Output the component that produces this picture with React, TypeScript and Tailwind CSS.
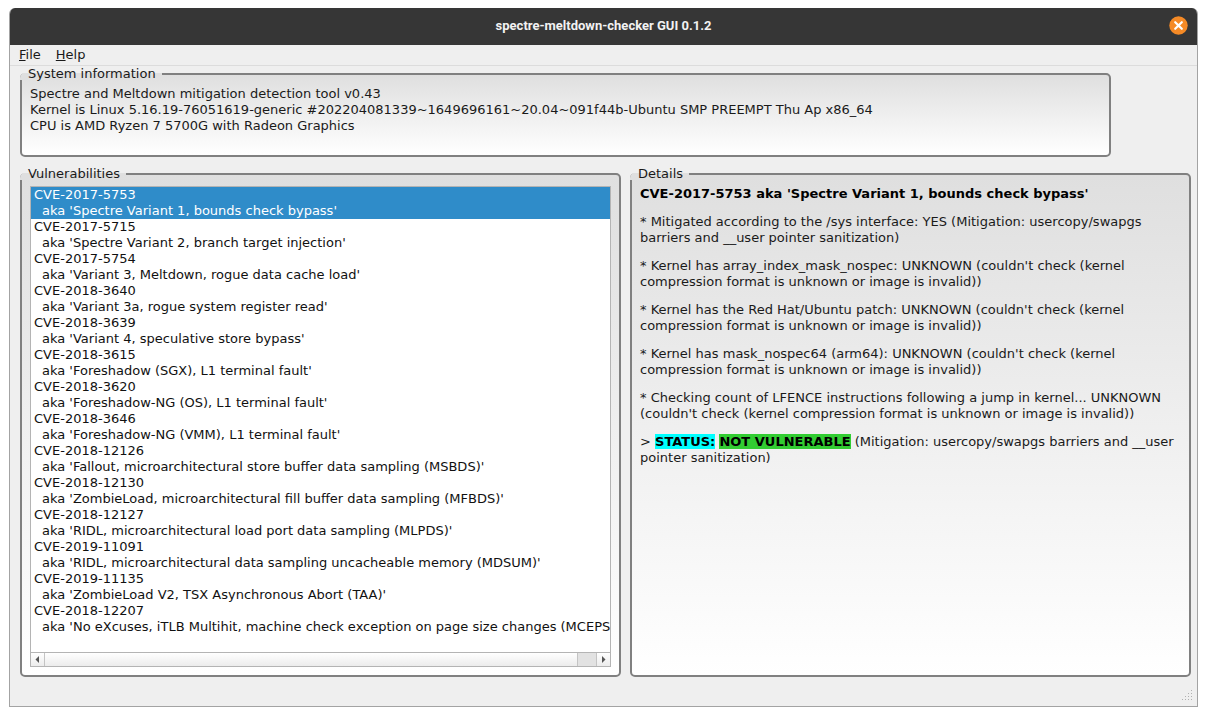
const items: [string, string][] = [
  ["CVE-2017-5753", "aka 'Spectre Variant 1, bounds check bypass'"],
  ["CVE-2017-5715", "aka 'Spectre Variant 2, branch target injection'"],
  ["CVE-2017-5754", "aka 'Variant 3, Meltdown, rogue data cache load'"],
  ["CVE-2018-3640", "aka 'Variant 3a, rogue system register read'"],
  ["CVE-2018-3639", "aka 'Variant 4, speculative store bypass'"],
  ["CVE-2018-3615", "aka 'Foreshadow (SGX), L1 terminal fault'"],
  ["CVE-2018-3620", "aka 'Foreshadow-NG (OS), L1 terminal fault'"],
  ["CVE-2018-3646", "aka 'Foreshadow-NG (VMM), L1 terminal fault'"],
  ["CVE-2018-12126", "aka 'Fallout, microarchitectural store buffer data sampling (MSBDS)'"],
  ["CVE-2018-12130", "aka 'ZombieLoad, microarchitectural fill buffer data sampling (MFBDS)'"],
  ["CVE-2018-12127", "aka 'RIDL, microarchitectural load port data sampling (MLPDS)'"],
  ["CVE-2019-11091", "aka 'RIDL, microarchitectural data sampling uncacheable memory (MDSUM)'"],
  ["CVE-2019-11135", "aka 'ZombieLoad V2, TSX Asynchronous Abort (TAA)'"],
  ["CVE-2018-12207", "aka 'No eXcuses, iTLB Multihit, machine check exception on page size changes (MCEPS"],
];

function Group({ title, className, children }: { title: string; className: string; children: React.ReactNode }) {
  return (
    <div className={`relative rounded-[5px] border-2 border-[#808080] bg-gradient-to-b from-[#dfdfdf] to-[#ffffff] ${className}`}>
      <span className="absolute left-[-2px] top-[-2px] h-[7px] w-[8px] rounded-tl-[5px] bg-[#dfdfdf]" />
      <span className="absolute left-0 top-[-9px] px-[6px] text-[13px] leading-[16px] text-[#1a1a1a]">
        <span className="absolute inset-x-0 top-[7px] h-[2px] bg-[#dfdfdf]" />
        <span className="relative">{title}</span>
      </span>
      {children}
    </div>
  );
}

function App() {
  return (
    <div className="h-[716px] w-[1207px] overflow-hidden bg-white pl-[9px] pt-[8px] text-[13px] leading-[16px] text-black" style={{ fontFamily: '"DejaVu Sans", sans-serif' }}>
      <div className="relative flex h-[699px] w-[1189px] flex-col overflow-hidden rounded-t-[6px] border border-t-0 border-[#a3a3a3] bg-[#efefef]">
        <div className="relative flex h-[37px] shrink-0 items-center justify-center bg-[#363636] pb-[2px] text-[13px] font-bold text-[#f2f2f2]" style={{ fontFamily: 'Roboto, sans-serif' }}>
          <span className="w-full text-center">spectre-meltdown-checker GUI 0.1.2</span>
          <svg className="absolute right-[9px] top-[8px]" width="19" height="19" viewBox="0 0 19 19">
            <circle cx="9.5" cy="9.5" r="9.2" fill="#f58a26" />
            <path d="M6.2 6.2 12.8 12.8M12.8 6.2 6.2 12.8" stroke="#fff" strokeWidth="2.2" strokeLinecap="round" />
          </svg>
        </div>
        <div className="flex h-[21px] shrink-0 items-center gap-[15px] border-b border-[#dcdcdc] pl-[9px] text-[#1a1a1a]">
          <span><span className="underline">F</span>ile</span>
          <span><span className="underline">H</span>elp</span>
        </div>
        <div className="flex min-h-0 flex-1 flex-col gap-[16px] pl-[10px] pr-[6px] pt-[7px]">
          <Group title="System information" className="h-[84px] w-[1091px] shrink-0 pl-[8px] pt-[11px] text-[#1a1a1a]">
            <div className="whitespace-nowrap">Spectre and Meltdown mitigation detection tool v0.43</div>
            <div className="whitespace-nowrap">Kernel is Linux 5.16.19-76051619-generic #202204081339~1649696161~20.04~091f44b-Ubuntu SMP PREEMPT Thu Ap x86_64</div>
            <div className="whitespace-nowrap">CPU is AMD Ryzen 7 5700G with Radeon Graphics</div>
          </Group>
          <div className="flex gap-[9px]">
            <Group title="Vulnerabilities" className="h-[504px] w-[601px] shrink-0 pl-[8px] pt-[11px]">
              <div className="flex h-[481px] w-[581px] flex-col border border-[#b4b4b4] bg-white">
                <div className="min-h-0 flex-1 overflow-hidden whitespace-nowrap text-[#111]">
                  {items.map(([cve, aka], i) => (
                    <div key={cve} className={i === 0 ? "bg-[#2f8cc9] text-white" : ""}>
                      <div className="pl-[3px]">{cve}</div>
                      <div className="pl-[11px]">{aka}</div>
                    </div>
                  ))}
                </div>
                <div className="flex h-[14px] shrink-0 border-t border-[#b4b4b4] bg-gradient-to-b from-[#ffffff] to-[#ececec]">
                  <div className="flex w-[14px] items-center justify-center border-r border-[#c4c4c4]">
                    <svg width="5" height="7" viewBox="0 0 5 7"><path d="M4 0 0.5 3.5 4 7Z" fill="#555" /></svg>
                  </div>
                  <div className="flex-1" />
                  <div className="w-[20px] border-x border-[#c4c4c4] bg-[#e2e2e2]" />
                  <div className="flex w-[13px] items-center justify-center">
                    <svg width="5" height="7" viewBox="0 0 5 7"><path d="M1 0 4.5 3.5 1 7Z" fill="#555" /></svg>
                  </div>
                </div>
              </div>
            </Group>
            <Group title="Details" className="h-[504px] w-[561px] shrink-0 pl-[8px] pr-[6px] pt-[11px] text-[#1a1a1a]">
              <div className="flex flex-col gap-[12px]">
                <p className="font-bold text-black">CVE-2017-5753 aka 'Spectre Variant 1, bounds check bypass'</p>
                <p>* Mitigated according to the /sys interface: YES (Mitigation: usercopy/swapgs barriers and __user pointer sanitization)</p>
                <p>* Kernel has array_index_mask_nospec: UNKNOWN (couldn't check (kernel compression format is unknown or image is invalid))</p>
                <p>* Kernel has the Red Hat/Ubuntu patch: UNKNOWN (couldn't check (kernel compression format is unknown or image is invalid))</p>
                <p>* Kernel has mask_nospec64 (arm64): UNKNOWN (couldn't check (kernel compression format is unknown or image is invalid))</p>
                <p>* Checking count of LFENCE instructions following a jump in kernel... UNKNOWN (couldn't check (kernel compression format is unknown or image is invalid))</p>
                <p>&gt; <b className="bg-[#00ffff] font-bold text-black">STATUS:</b> <b className="bg-[#32cd32] font-bold text-black">NOT VULNERABLE</b> (Mitigation: usercopy/swapgs barriers and __user pointer sanitization)</p>
              </div>
            </Group>
          </div>
        </div>
        <svg className="absolute bottom-[4px] right-[3px]" width="12" height="12" viewBox="0 0 12 12" fill="#b0b0b0">
          <rect x="9" y="0" width="1" height="1" /><rect x="6" y="3" width="1" height="1" /><rect x="9" y="3" width="1" height="1" />
          <rect x="3" y="6" width="1" height="1" /><rect x="6" y="6" width="1" height="1" /><rect x="9" y="6" width="1" height="1" />
          <rect x="0" y="9" width="1" height="1" /><rect x="3" y="9" width="1" height="1" /><rect x="6" y="9" width="1" height="1" /><rect x="9" y="9" width="1" height="1" />
        </svg>
      </div>
    </div>
  );
}

export default App;
